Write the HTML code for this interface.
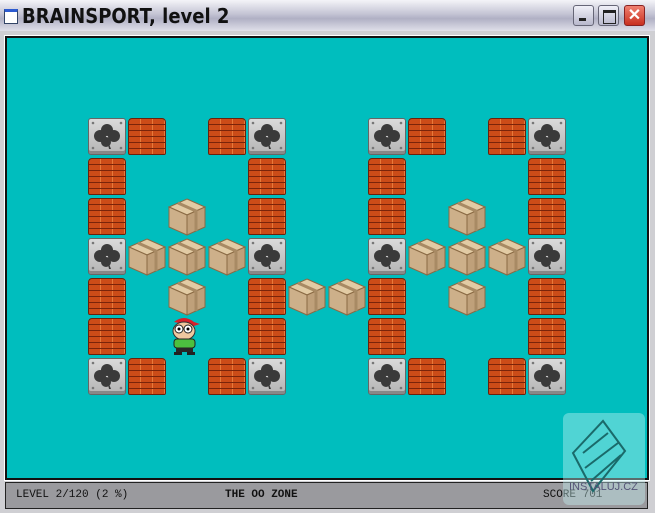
<!DOCTYPE html><html><head><style>
body{margin:0;width:655px;height:513px;overflow:hidden;background:#d4d0c8;font-family:"Liberation Sans",sans-serif}
#title{position:absolute;left:0;top:0;width:655px;height:31px;background:linear-gradient(#f4f4f8,#c4c4d4 45%,#b0b0c4 60%,#e0e0ea);}
#title .t{position:absolute;left:22px;top:4px;font:bold 20px "DejaVu Sans Condensed","Liberation Sans",sans-serif;color:#111}
.ic{position:absolute;left:4px;top:9px;width:12px;height:11px;background:#fff;border:1px solid #346;border-top:3px solid #2c5ad0}
.btn{position:absolute;top:5px;width:21px;height:21px;border-radius:3px;border:1px solid #667;background:linear-gradient(#f0f0f8,#b8b8cc);box-sizing:border-box}
#frame{position:absolute;left:0;top:31px;width:655px;height:482px;background:#cfcfd3}
#play{position:absolute;left:5px;top:36px;width:640px;height:440px;border:2px solid #111;background:#00bebe;outline:1px solid #fff}
#stat{position:absolute;left:5px;top:482px;width:641px;height:25px;background:#9a9a9e;border:1px solid #222;font:11px "Liberation Mono",monospace;color:#111}
.tile{position:absolute;width:38px;height:37px}
.brick{border-radius:4px 4px 2px 2px;background:
repeating-linear-gradient(0deg,#7a240a 0 1px,transparent 1px 6px),
repeating-linear-gradient(90deg,#e87a3a 0 1px,transparent 1px 12px),#cc4c18;box-shadow:inset 0 0 0 1px #6a200c}
.clov{background:linear-gradient(#dadada,#b4b4b4);border:1px solid #666;border-radius:3px;box-sizing:border-box;box-shadow:inset 0 -3px 0 #888}
.wm{position:absolute;left:563px;top:413px;width:82px;height:92px;background:rgba(200,245,245,.4);border-radius:6px}
</style></head><body>
<div id="frame"></div>
<div id="title"><div class="ic"></div><div class="t">BRAINSPORT, level 2</div>
<div class="btn" style="left:573px"><div style="position:absolute;left:5px;bottom:4px;width:7px;height:3px;background:#222"></div></div>
<div class="btn" style="left:598px"><div style="position:absolute;left:4px;top:4px;width:11px;height:10px;border:1px solid #222;border-top:3px solid #222"></div></div>
<div class="btn" style="left:624px;background:linear-gradient(#f08070,#c83020);border-color:#822;color:#fff;font:bold 16px sans-serif;text-align:center;line-height:19px">✕</div>
</div>
<div id="play"></div>
<div id="tiles"></div>
<div id="stat"><span style="position:absolute;left:10px;top:6px">LEVEL 2/120 (2 %)</span><span style="position:absolute;left:219px;top:6px;font-weight:bold">THE OO ZONE</span><span style="position:absolute;left:537px;top:6px">SCORE 701</span></div>
<div class="wm"><svg width="82" height="92" viewBox="0 0 82 92"><g fill="none" stroke="#1a6a6a" stroke-width="2"><path d="M10 40 L40 8 L62 38 L30 78 Z M20 40 L45 20 M22 55 L55 30 M28 68 L58 42"/></g><text x="6" y="77" font-size="11" fill="#557" font-family="Liberation Sans">INSTALUJ.CZ</text></svg></div>
<script>
var m=["CB.BC..CB.BC","B...B..B...B","B.X.B..B.X.B","CXXXC..CXXXC","B.X.BXXB.X.B","B.P.B..B...B","CB.BC..CB.BC"];
var h="";
var clov='<svg width="36" height="35" viewBox="0 0 36 35"><g fill="#3a3a3a"><circle cx="18" cy="11" r="6"/><circle cx="11" cy="17" r="6"/><circle cx="25" cy="17" r="6"/><circle cx="17" cy="23" r="5"/><path d="M18 20 L22 30 L20 30Z"/></g><g fill="#777"><circle cx="4" cy="4" r="1.3"/><circle cx="32" cy="4" r="1.3"/><circle cx="4" cy="29" r="1.3"/><circle cx="32" cy="29" r="1.3"/></g></svg>';
var box='<svg width="38" height="38" viewBox="0 0 38 38"><polygon points="19,1 37,9 19,17 1,9" fill="#e2cba4" stroke="#8a6a44"/><polygon points="1,9 19,17 19,37 1,29" fill="#cdb08a" stroke="#8a6a44"/><polygon points="19,17 37,9 37,29 19,37" fill="#bfa07a" stroke="#8a6a44"/><path d="M10 5 L28 13 L28 33" stroke="#a88a64" stroke-width="3" fill="none"/></svg>';
var pl='<svg width="38" height="40" viewBox="0 0 38 40"><path d="M8 6 Q18 -2 28 6 L34 8 L28 10 Z" fill="#d8202a"/><ellipse cx="18" cy="15" rx="11" ry="9" fill="#f0c8a0" stroke="#333"/><circle cx="13" cy="13" r="4" fill="#fff" stroke="#222"/><circle cx="22" cy="13" r="4" fill="#fff" stroke="#222"/><circle cx="13" cy="13" r="1.5"/><circle cx="22" cy="13" r="1.5"/><rect x="8" y="23" width="21" height="9" rx="3" fill="#4cc040" stroke="#222"/><rect x="10" y="32" width="17" height="4" fill="#282828"/><rect x="8" y="36" width="8" height="3" fill="#222"/><rect x="21" y="36" width="8" height="3" fill="#222"/></svg>';
for(var r=0;r<7;r++)for(var c=0;c<12;c++){var ch=m[r][c],x=88+40*c,y=118+40*r;
if(ch=="B")h+='<div class="tile brick" style="left:'+x+'px;top:'+y+'px"></div>';
if(ch=="C")h+='<div class="tile clov" style="left:'+x+'px;top:'+y+'px">'+clov+'</div>';
if(ch=="X")h+='<div class="tile" style="left:'+x+'px;top:'+y+'px">'+box+'</div>';
if(ch=="P")h+='<div class="tile" style="left:'+(x-2)+'px;top:'+(y-2)+'px">'+pl+'</div>';}
document.getElementById("tiles").innerHTML=h;
</script>
</body></html>
